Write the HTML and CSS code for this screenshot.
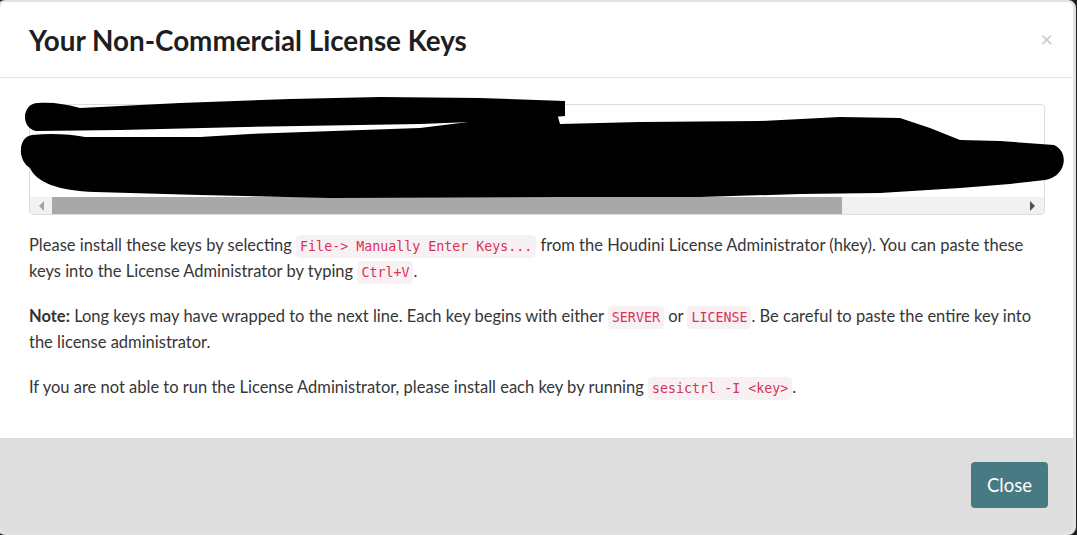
FILE: index.html
```html
<!DOCTYPE html>
<html>
<head>
<meta charset="utf-8">
<link rel="stylesheet" href="styles.css">
</head>
<body>
<div class="modal">
  <div class="modal-header">
    <h4 class="modal-title">Your Non-Commercial License Keys</h4>
    <span class="close">×</span>
  </div>
  <div class="modal-body">
    <div class="keys-wrap">
      <div class="keys-box">
        <div class="keys-content"></div>
        <div class="hscroll">
          <span class="arrow arrow-left"></span>
          <div class="track"><div class="thumb"></div></div>
          <span class="arrow arrow-right"></span>
        </div>
      </div>
      <svg class="redact" width="1077" height="110" viewBox="0 95 1077 110">
        <path d="M38 103 C22 103 20 128 36 131 L120 130 L245 127 L420 124 L520 120 L565 116 L565 101 L480 98 L380 97 L290 99 L180 103 L80 108 C66 104 52 102 38 103 Z" fill="#000"/>
        <path d="M32 135 C18 137 17 160 30 168 C36 182 58 191 95 192 L200 195 L330 198 L560 197 L700 197 L800 194 L880 193 L960 188 L1010 184 L1045 180 C1066 177 1070 152 1054 145 L1000 141 L960 140 L930 128 L900 118 L840 117 L760 121 L640 122 L560 124 L556 110 L545 104 L530 108 L500 130 L420 136 L250 134 L200 137 L85 137 C70 134 50 133 32 135 Z" fill="#000"/>
        <path d="M250 134 L420 128 L500 118 L540 112 L545 140 L300 142 Z" fill="#000"/>
      </svg>
    </div>
    <p>Please install these keys by selecting <code>File-&gt; Manually Enter Keys...</code> from the Houdini License Administrator (hkey). You can paste these keys into the License Administrator by typing <code>Ctrl+V</code>.</p>
    <p><strong>Note:</strong> Long keys may have wrapped to the next line. Each key begins with either <code>SERVER</code> or <code>LICENSE</code>. Be careful to paste the entire key into the license administrator.</p>
    <p>If you are not able to run the License Administrator, please install each key by running <code>sesictrl -I &lt;key&gt;</code>.</p>
  </div>
  <div class="modal-footer">
    <button class="btn">Close</button>
  </div>
</div>
</body>
</html>
```

FILE: styles.css
```css
html, body {
  margin: 0;
  padding: 0;
}
body {
  background: #1e1e1e;
  width: 1077px;
  height: 535px;
  overflow: hidden;
  font-family: Lato, "Open Sans", sans-serif;
  color: #363636;
}
.modal {
  margin-left: -3px;
  width: 1079px;
  height: 535px;
  box-sizing: border-box;
  border: 3px solid #e2e2e2;
  border-top-width: 2px;
  border-radius: 8px;
  background: #fff;
  display: flex;
  flex-direction: column;
  overflow: hidden;
}
.modal-header {
  height: 75px;
  flex: 0 0 auto;
  border-bottom: 1px solid #e3e3e3;
  display: flex;
  align-items: center;
  justify-content: space-between;
  padding: 0 20px 0 29px;
}
.modal-title {
  margin: 0;
  font-size: 27.8px;
  font-weight: 700;
  color: #1d1d22;
  line-height: 1.2;
  padding-top: 2px;
}
.close {
  font-size: 22px;
  color: #c9c9c9;
  line-height: 1;
  margin-top: -1px;
}
.modal-body {
  flex: 1 1 auto;
  padding: 26px 28px 0 29px;
}
.keys-wrap {
  position: relative;
}
.keys-box {
  border: 1px solid #dcdcdc;
  border-radius: 4px;
  height: 111px;
  box-sizing: border-box;
  display: flex;
  flex-direction: column;
  overflow: hidden;
}
.keys-content {
  flex: 1 1 auto;
}
.hscroll {
  height: 17px;
  background: #f1f1f1;
  display: flex;
  align-items: center;
}
.arrow {
  width: 0;
  height: 0;
  border-top: 5px solid transparent;
  border-bottom: 5px solid transparent;
  flex: 0 0 auto;
}
.arrow-left {
  border-right: 5px solid #a3a3a3;
  margin: 0 8px 0 9px;
}
.arrow-right {
  border-left: 5px solid #505050;
  margin: 0 9px 0 8px;
}
.track {
  flex: 1 1 auto;
  height: 17px;
}
.thumb {
  width: 790px;
  height: 17px;
  background: #a8a8a8;
}
.redact {
  position: absolute;
  left: -29px;
  top: -9px;
}
p {
  margin: 0 0 19px;
  font-size: 16.5px;
  line-height: 26px;
}
.keys-wrap + p {
  margin-top: 17px;
}
strong {
  font-weight: 700;
  color: #333;
}
code {
  font-family: "DejaVu Sans Mono", "Liberation Mono", monospace;
  font-size: 13.3px;
  line-height: 1;
  color: #d63359;
  background: #f8f1f3;
  padding: 4px 4px;
  border-radius: 4px;
}
.modal-footer {
  flex: 0 0 94px;
  background: #dedede;
  display: flex;
  justify-content: flex-end;
  align-items: center;
  padding: 0 25px;
}
.btn {
  background: #487a84;
  color: #fff;
  border: none;
  border-radius: 4px;
  width: 77px;
  height: 46px;
  font-family: Lato, sans-serif;
  font-size: 18.5px;
  padding: 0;
}
```
